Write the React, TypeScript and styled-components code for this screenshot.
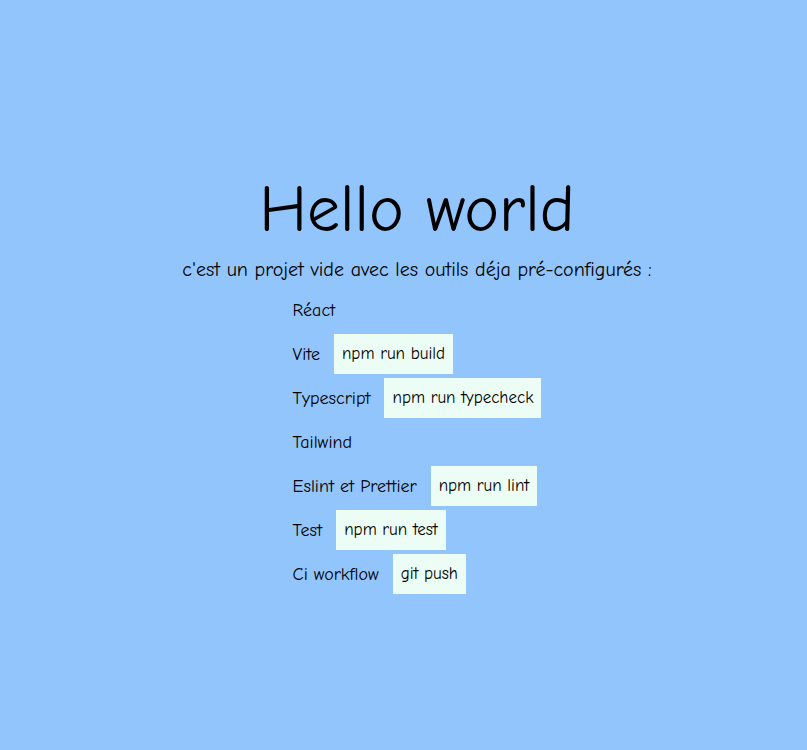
import React from "react";
import styled, { createGlobalStyle } from "styled-components";

const Global = createGlobalStyle`
  html, body { margin: 0; padding: 0; }
  body {
    background: #93c5fd;
    font-family: "Comic Sans MS", "Comic Neue", "Noto Sans", "DejaVu Sans", sans-serif;
    color: #000;
  }
`;

const Page = styled.main`
  min-height: 750px;
  box-sizing: border-box;
  display: flex;
  flex-direction: column;
  align-items: center;
  padding-top: 172px;
  padding-left: 27px;
`;

const Title = styled.h1`
  margin: 0;
  font-size: 66px;
  font-weight: 400;
  line-height: 76px;
`;

const Subtitle = styled.p`
  margin: 8px 0 0;
  font-size: 20px;
  line-height: 28px;
`;

const List = styled.ul`
  list-style: none;
  margin: 6px 0 0;
  padding: 0;
  display: flex;
  flex-direction: column;
  gap: 4px;
`;

const Item = styled.li`
  display: flex;
  align-items: center;
  gap: 14px;
  height: 40px;
  font-size: 18px;
`;

const Cmd = styled.code`
  font-family: inherit;
  font-size: 17px;
  background: #ecfdf5;
  padding: 8px;
  line-height: 24px;
`;

const tools: { name: string; cmd?: string }[] = [
  { name: "Réact" },
  { name: "Vite", cmd: "npm run build" },
  { name: "Typescript", cmd: "npm run typecheck" },
  { name: "Tailwind" },
  { name: "Eslint et Prettier", cmd: "npm run lint" },
  { name: "Test", cmd: "npm run test" },
  { name: "Ci workflow", cmd: "git push" },
];

export default function App() {
  return (
    <>
      <Global />
      <Page>
        <Title>Hello world</Title>
        <Subtitle>c'est un projet vide avec les outils déja pré-configurés :</Subtitle>
        <List>
          {tools.map((t) => (
            <Item key={t.name}>
              <span>{t.name}</span>
              {t.cmd && <Cmd>{t.cmd}</Cmd>}
            </Item>
          ))}
        </List>
      </Page>
    </>
  );
}
